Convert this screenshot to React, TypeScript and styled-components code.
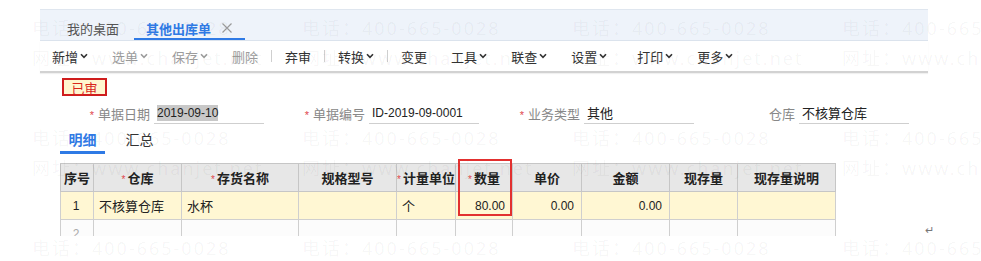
import React from "react";
import styled, { createGlobalStyle } from "styled-components";

const Global = createGlobalStyle`
  html, body { margin: 0; padding: 0; background: #fff; }
  body { font-family: "Liberation Sans", "Noto Sans CJK SC", sans-serif; color: #333; }
  * { box-sizing: border-box; }
`;

const Page = styled.div`
  position: relative;
  width: 981px;
  height: 261px;
  overflow: hidden;
  background: #fff;
`;

const Main = styled.div`
  margin-left: 40px;
  width: 888px;
  padding-top: 9px;
`;

const TabBar = styled.div`
  display: flex;
  height: 32px;
  padding-left: 15px;
  gap: 3px;
  background: #eef3fa;
  border-top: 1px solid #dfe6ef;
  border-bottom: 1px solid #dbe3ed;
`;

const Tab = styled.div<{ $active?: boolean }>`
  display: flex;
  align-items: center;
  gap: 10px;
  height: 30px;
  padding: 8px 12px 0;
  font-size: 13px;
  font-weight: ${(p) => (p.$active ? 700 : 400)};
  color: ${(p) => (p.$active ? "#2f7ae5" : "#555")};
  border-bottom: 2px solid ${(p) => (p.$active ? "#2f7ae5" : "transparent")};
`;

const Close = styled.svg`
  width: 12px;
  height: 12px;
  stroke: #9a9a9a;
  stroke-width: 1.2;
`;

const Toolbar = styled.div`
  display: flex;
  align-items: center;
  height: 32px;
  border-bottom: 2px solid #d2d2d2;
  box-shadow: 0 1px 1px rgba(0, 0, 0, 0.06);
`;

const ToolItem = styled.div<{ $disabled?: boolean; $lead?: number }>`
  display: flex;
  align-items: center;
  gap: 2px;
  padding: 0 12px;
  margin-left: ${(p) => p.$lead ?? 0}px;
  font-size: 13px;
  color: ${(p) => (p.$disabled ? "#9c9c9c" : "#333")};
`;

const Chevron = styled.svg`
  width: 8px;
  height: 6px;
  fill: none;
  stroke: currentColor;
  stroke-width: 1.6;
`;

const Sep = styled.span`
  width: 1px;
  height: 12px;
  margin: 0 1px;
  background: #cfcfcf;
`;

const Body = styled.div`
  padding-left: 20px;
`;

const Badge = styled.div`
  display: flex;
  align-items: center;
  justify-content: center;
  width: 45px;
  height: 18px;
  margin: 5px 0 0 2px;
  border: 2px solid #cf1d1d;
  background: #fff6cf;
  color: #d8261c;
  font-size: 13px;
`;

const FormRow = styled.div`
  display: flex;
  margin: 6px 0 0 2px;
`;

const Field = styled.div`
  display: flex;
  align-items: center;
  width: 215px;
`;

const Label = styled.div`
  width: 88px;
  text-align: right;
  font-size: 13px;
  color: #888;
`;

const Star = styled.span<{ $tight?: boolean }>`
  color: #e0474c;
  font-size: ${(p) => (p.$tight ? 10 : 11)}px;
  font-weight: 400;
  margin-right: ${(p) => (p.$tight ? 2 : 4)}px;
`;

const Input = styled.div`
  display: flex;
  align-items: center;
  width: 110px;
  height: 22px;
  margin-left: 4px;
  padding-left: 3px;
  border-bottom: 1px solid #cfcfcf;
  font-size: 13px;
  color: #222;
`;

const Num = styled.span<{ $selected?: boolean }>`
  font-size: 12px;
  padding: 1px 0;
  background: ${(p) => (p.$selected ? "#c8c8c8" : "transparent")};
`;

const SubTabs = styled.div`
  display: flex;
  gap: 12px;
`;

const SubTab = styled.div<{ $active?: boolean }>`
  display: flex;
  justify-content: center;
  align-items: center;
  width: 45px;
  height: 30px;
  padding-top: 3px;
  font-size: 14px;
  font-weight: ${(p) => (p.$active ? 700 : 400)};
  color: ${(p) => (p.$active ? "#2f7ae5" : "#333")};
  border-bottom: 3px solid ${(p) => (p.$active ? "#2f7ae5" : "transparent")};
`;

const TableRow = styled.div`
  display: flex;
  margin-top: 9px;
`;

const TableFrame = styled.div`
  position: relative;
`;

const TableClip = styled.div`
  height: 73px;
  overflow: hidden;
`;

const Grid = styled.table`
  border-collapse: collapse;
  table-layout: fixed;
  width: 776px;
  font-size: 13px;
`;

const Th = styled.th`
  height: 28px;
  padding: 0;
  border: 1px solid #c6c6c6;
  background: #e7e7e7;
  color: #222;
  font-weight: 700;
  text-align: center;
  white-space: nowrap;
  overflow: hidden;
`;

const Td = styled.td<{ $align?: "left" | "right" | "center"; $muted?: boolean }>`
  height: 28px;
  padding: 0 7px 0 5px;
  border: 1px solid #cfcfcf;
  text-align: ${(p) => p.$align ?? "left"};
  color: ${(p) => (p.$muted ? "#aaa" : "#222")};
  white-space: nowrap;
`;

const Tr = styled.tr<{ $bg: string }>`
  background: ${(p) => p.$bg};
`;

const Highlight = styled.div`
  position: absolute;
  left: 398px;
  top: -4px;
  width: 54px;
  height: 57px;
  border: 2px solid #e2302f;
  pointer-events: none;
`;

const ReturnMark = styled.span`
  margin: 62px -6px 0 auto;
  font-size: 11px;
  line-height: 11px;
  color: #777;
`;

const Watermark = styled.div`
  position: absolute;
  inset: 0;
  padding: 13px 0 0 32px;
  display: grid;
  grid-template-columns: repeat(4, 270px);
  grid-auto-rows: 110px;
  pointer-events: none;
  font-family: "Noto Sans", "Noto Sans CJK SC", sans-serif;
  font-size: 18px;
  letter-spacing: 2px;
  line-height: 30px;
  color: rgba(0, 0, 0, 0.045);
  white-space: nowrap;
`;

const Mark = styled.div``;

const Down = () => (
  <Chevron viewBox="0 0 8 6">
    <path d="M1 1.2 L4 4.4 L7 1.2" />
  </Chevron>
);

const tools: { label: string; menu?: boolean; disabled?: boolean; sepBefore?: boolean; lead?: number }[] = [
  { label: "新增", menu: true },
  { label: "选单", menu: true, disabled: true },
  { label: "保存", menu: true, disabled: true },
  { label: "删除", disabled: true },
  { label: "弃审", sepBefore: true },
  { label: "转换", menu: true, sepBefore: true },
  { label: "变更", sepBefore: true },
  { label: "工具", menu: true },
  { label: "联查", menu: true },
  { label: "设置", menu: true },
  { label: "打印", menu: true, lead: 6 },
  { label: "更多", menu: true },
];

const cols = [33, 88, 117, 98, 59, 57, 69, 88, 68, 98];
const heads: { t: string; req?: boolean }[] = [
  { t: "序号" },
  { t: "仓库", req: true },
  { t: "存货名称", req: true },
  { t: "规格型号" },
  { t: "计量单位", req: true },
  { t: "数量", req: true },
  { t: "单价" },
  { t: "金额" },
  { t: "现存量" },
  { t: "现存量说明" },
];

export default function App() {
  const tiles = Array.from({ length: 12 });
  return (
    <Page>
      <Global />
      <Main>
        <TabBar>
          <Tab>我的桌面</Tab>
          <Tab $active>
            其他出库单
            <Close viewBox="0 0 12 12">
              <path d="M1.5 1.5 L10.5 10.5 M10.5 1.5 L1.5 10.5" />
            </Close>
          </Tab>
        </TabBar>
        <Toolbar>
          {tools.map((t) => (
            <React.Fragment key={t.label}>
              {t.sepBefore && <Sep />}
              <ToolItem $disabled={t.disabled} $lead={t.lead}>
                {t.label}
                {t.menu && <Down />}
              </ToolItem>
            </React.Fragment>
          ))}
        </Toolbar>
        <Body>
          <Badge>已审</Badge>
          <FormRow>
            <Field>
              <Label><Star>*</Star>单据日期</Label>
              <Input><Num $selected>2019-09-10</Num></Input>
            </Field>
            <Field>
              <Label><Star>*</Star>单据编号</Label>
              <Input><Num>ID-2019-09-0001</Num></Input>
            </Field>
            <Field>
              <Label><Star>*</Star>业务类型</Label>
              <Input>其他</Input>
            </Field>
            <Field>
              <Label>仓库</Label>
              <Input>不核算仓库</Input>
            </Field>
          </FormRow>
          <SubTabs>
            <SubTab $active>明细</SubTab>
            <SubTab>汇总</SubTab>
          </SubTabs>
          <TableRow>
            <TableFrame>
              <TableClip>
                <Grid>
                  <colgroup>
                    {cols.map((w, i) => (
                      <col key={i} style={{ width: w }} />
                    ))}
                  </colgroup>
                  <thead>
                    <tr>
                      {heads.map((h) => (
                        <Th key={h.t}>
                          {h.req && <Star $tight>*</Star>}
                          {h.t}
                        </Th>
                      ))}
                    </tr>
                  </thead>
                  <tbody>
                    <Tr $bg="#fff7d3">
                      <Td $align="center"><Num>1</Num></Td>
                      <Td>不核算仓库</Td>
                      <Td>水杯</Td>
                      <Td />
                      <Td>个</Td>
                      <Td $align="right"><Num>80.00</Num></Td>
                      <Td $align="right"><Num>0.00</Num></Td>
                      <Td $align="right"><Num>0.00</Num></Td>
                      <Td />
                      <Td />
                    </Tr>
                    <Tr $bg="#fcfcfc">
                      <Td $align="center" $muted><Num>2</Num></Td>
                      <Td />
                      <Td />
                      <Td />
                      <Td />
                      <Td />
                      <Td />
                      <Td />
                      <Td />
                      <Td />
                    </Tr>
                  </tbody>
                </Grid>
              </TableClip>
              <Highlight />
            </TableFrame>
            <ReturnMark>↵</ReturnMark>
          </TableRow>
        </Body>
      </Main>
      <Watermark>
        {tiles.map((_, i) => (
          <Mark key={i}>
            <div>电话：400-665-0028</div>
            <div>网址：www.chanjet.net</div>
          </Mark>
        ))}
      </Watermark>
    </Page>
  );
}
